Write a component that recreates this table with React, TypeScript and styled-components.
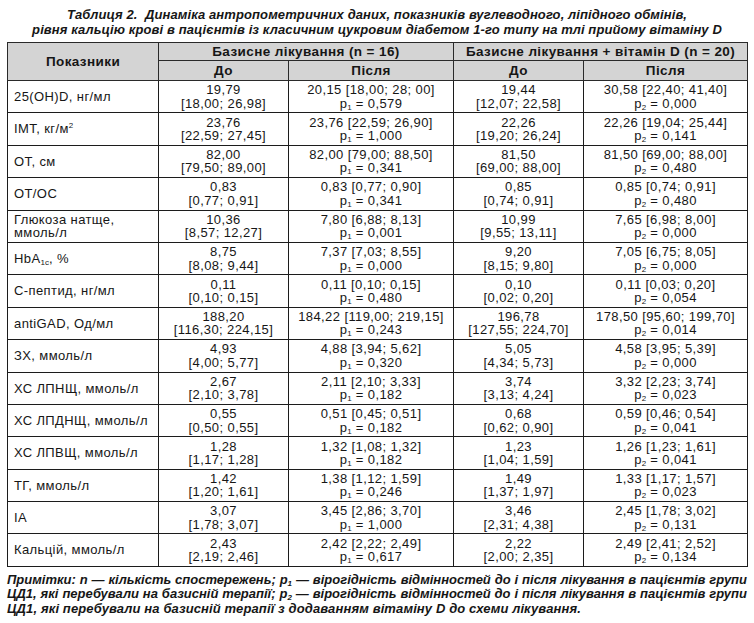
import React from "react";
import styled, { createGlobalStyle } from "styled-components";

const Global = createGlobalStyle`
  html, body { margin: 0; padding: 0; background: #fff; }
  body { font-family: "Liberation Sans", Arial, sans-serif; color: #161616; }
`;

const Page = styled.div`
  width: 754px;
  height: 623px;
  box-sizing: border-box;
  padding: 8px 7px 0 7px;
  overflow: hidden;
`;

const Title = styled.div`
  font-weight: bold;
  font-style: italic;
  font-size: 13px;
  line-height: 14.5px;
  text-align: center;
  letter-spacing: 0.1px;
  margin-bottom: 5px;
`;

const Table = styled.table`
  width: 740px;
  border-collapse: collapse;
  table-layout: fixed;
  font-size: 13px;
  letter-spacing: 0.4px;
`;

const HeadCell = styled.th`
  background: #d4d4d4;
  border: 1px solid #2a2a2a;
  font-weight: bold;
  font-size: 13.5px;
  line-height: 15px;
  padding: 0;
  text-align: center;
  vertical-align: middle;
`;

const HeadRow = styled.tr<{ $h: number }>`
  height: ${(p) => p.$h}px;
`;

const BodyRow = styled.tr`
  height: 32.4px;
`;

const Cell = styled.td<{ $left?: boolean }>`
  border: 1px solid #1c1c1c;
  padding: ${(p) => (p.$left ? "0 4px 0 6px" : "0 2px")};
  text-align: ${(p) => (p.$left ? "left" : "center")};
  vertical-align: middle;
  line-height: 13.4px;
  white-space: nowrap;
`;

const Sub = styled.sub`
  font-size: 8px;
  vertical-align: -2px;
  line-height: 0;
  letter-spacing: 0;
`;

const Sup = styled.sup`
  font-size: 8px;
  vertical-align: 5px;
  line-height: 0;
`;

const Notes = styled.div`
  margin-top: 6px;
  font-weight: bold;
  font-style: italic;
  font-size: 13px;
  line-height: 14.5px;
`;

const NoteLine = styled.div<{ $full?: boolean }>`
  text-align: ${(p) => (p.$full ? "justify" : "left")};
  text-align-last: ${(p) => (p.$full ? "justify" : "left")};
  letter-spacing: ${(p) => (p.$full ? "0" : "0.12px")};
  white-space: nowrap;
`;

type Row = {
  label: React.ReactNode;
  b1: [string, string];
  a1: [string, string];
  b2: [string, string];
  a2: [string, string];
};

const rows: Row[] = [
  { label: "25(OH)D, нг/мл", b1: ["19,79", "[18,00; 26,98]"], a1: ["20,15 [18,00; 28; 00]", "0,579"], b2: ["19,44", "[12,07; 22,58]"], a2: ["30,58 [22,40; 41,40]", "0,000"] },
  { label: <>ІМТ, кг/м<Sup>2</Sup></>, b1: ["23,76", "[22,59; 27,45]"], a1: ["23,76 [22,59; 26,90]", "1,000"], b2: ["22,26", "[19,20; 26,24]"], a2: ["22,26 [19,04; 25,44]", "0,141"] },
  { label: "ОТ, см", b1: ["82,00", "[79,50; 89,00]"], a1: ["82,00 [79,00; 88,50]", "0,341"], b2: ["81,50", "[69,00; 88,00]"], a2: ["81,50 [69,00; 88,00]", "0,480"] },
  { label: "ОТ/ОС", b1: ["0,83", "[0,77; 0,91]"], a1: ["0,83 [0,77; 0,90]", "0,341"], b2: ["0,85", "[0,74; 0,91]"], a2: ["0,85 [0,74; 0,91]", "0,480"] },
  { label: <>Глюкоза натще,<br />ммоль/л</>, b1: ["10,36", "[8,57; 12,27]"], a1: ["7,80 [6,88; 8,13]", "0,001"], b2: ["10,99", "[9,55; 13,11]"], a2: ["7,65 [6,98; 8,00]", "0,000"] },
  { label: <>HbA<Sub>1c</Sub>, %</>, b1: ["8,75", "[8,08; 9,44]"], a1: ["7,37 [7,03; 8,55]", "0,000"], b2: ["9,20", "[8,15; 9,80]"], a2: ["7,05 [6,75; 8,05]", "0,000"] },
  { label: "С-пептид, нг/мл", b1: ["0,11", "[0,10; 0,15]"], a1: ["0,11 [0,10; 0,15]", "0,480"], b2: ["0,10", "[0,02; 0,20]"], a2: ["0,11 [0,03; 0,20]", "0,054"] },
  { label: "antiGAD, Од/мл", b1: ["188,20", "[116,30; 224,15]"], a1: ["184,22 [119,00; 219,15]", "0,243"], b2: ["196,78", "[127,55; 224,70]"], a2: ["178,50 [95,60; 199,70]", "0,014"] },
  { label: "ЗХ, ммоль/л", b1: ["4,93", "[4,00; 5,77]"], a1: ["4,88 [3,94; 5,62]", "0,320"], b2: ["5,05", "[4,34; 5,73]"], a2: ["4,58 [3,95; 5,39]", "0,000"] },
  { label: "ХС ЛПНЩ, ммоль/л", b1: ["2,67", "[2,10; 3,78]"], a1: ["2,11 [2,10; 3,33]", "0,182"], b2: ["3,74", "[3,13; 4,24]"], a2: ["3,32 [2,23; 3,74]", "0,023"] },
  { label: "ХС ЛПДНЩ, ммоль/л", b1: ["0,55", "[0,50; 0,55]"], a1: ["0,51 [0,45; 0,51]", "0,182"], b2: ["0,68", "[0,62; 0,90]"], a2: ["0,59 [0,46; 0,54]", "0,041"] },
  { label: "ХС ЛПВЩ, ммоль/л", b1: ["1,28", "[1,17; 1,28]"], a1: ["1,32 [1,08; 1,32]", "0,182"], b2: ["1,23", "[1,04; 1,59]"], a2: ["1,26 [1,23; 1,61]", "0,041"] },
  { label: "ТГ, ммоль/л", b1: ["1,42", "[1,20; 1,61]"], a1: ["1,38 [1,12; 1,59]", "0,246"], b2: ["1,49", "[1,37; 1,97]"], a2: ["1,33 [1,17; 1,57]", "0,023"] },
  { label: "ІА", b1: ["3,07", "[1,78; 3,07]"], a1: ["3,45 [2,86; 3,70]", "1,000"], b2: ["3,46", "[2,31; 4,38]"], a2: ["2,45 [1,78; 3,02]", "0,131"] },
  { label: "Кальцій, ммоль/л", b1: ["2,43", "[2,19; 2,46]"], a1: ["2,42 [2,22; 2,49]", "0,617"], b2: ["2,22", "[2,00; 2,35]"], a2: ["2,49 [2,41; 2,52]", "0,134"] },
];

const Pair = ({ v }: { v: [string, string] }) => (
  <>
    {v[0]}
    <br />
    {v[1]}
  </>
);

const PVal = ({ v, n }: { v: [string, string]; n: string }) => (
  <>
    {v[0]}
    <br />
    p<Sub>{n}</Sub> = {v[1]}
  </>
);

export default function App() {
  return (
    <Page>
      <Global />
      <Title>
        Таблиця 2.&nbsp; Динаміка антропометричних даних, показників вуглеводного, ліпідного обмінів,
        <br />
        рівня кальцію крові в пацієнтів із класичним цукровим діабетом 1-го типу на тлі прийому вітаміну D
      </Title>
      <Table>
        <colgroup>
          <col style={{ width: 151 }} />
          <col style={{ width: 130 }} />
          <col style={{ width: 165 }} />
          <col style={{ width: 130 }} />
          <col style={{ width: 164 }} />
        </colgroup>
        <thead>
          <HeadRow $h={18}>
            <HeadCell rowSpan={2}>Показники</HeadCell>
            <HeadCell colSpan={2}>Базисне лікування (n = 16)</HeadCell>
            <HeadCell colSpan={2}>Базисне лікування + вітамін D (n = 20)</HeadCell>
          </HeadRow>
          <HeadRow $h={20}>
            <HeadCell>До</HeadCell>
            <HeadCell>Після</HeadCell>
            <HeadCell>До</HeadCell>
            <HeadCell>Після</HeadCell>
          </HeadRow>
        </thead>
        <tbody>
          {rows.map((r, i) => (
            <BodyRow key={i}>
              <Cell $left>{r.label}</Cell>
              <Cell><Pair v={r.b1} /></Cell>
              <Cell><PVal v={r.a1} n="1" /></Cell>
              <Cell><Pair v={r.b2} /></Cell>
              <Cell><PVal v={r.a2} n="2" /></Cell>
            </BodyRow>
          ))}
        </tbody>
      </Table>
      <Notes>
        <NoteLine $full>
          Примітки: n — кількість спостережень; p<Sub>1</Sub> — вірогідність відмінностей до і після лікування в пацієнтів групи
        </NoteLine>
        <NoteLine $full>
          ЦД1, які перебували на базисній терапії; p<Sub>2</Sub> — вірогідність відмінностей до і після лікування в пацієнтів групи
        </NoteLine>
        <NoteLine>
          ЦД1, які перебували на базисній терапії з додаванням вітаміну D до схеми лікування.
        </NoteLine>
      </Notes>
    </Page>
  );
}
